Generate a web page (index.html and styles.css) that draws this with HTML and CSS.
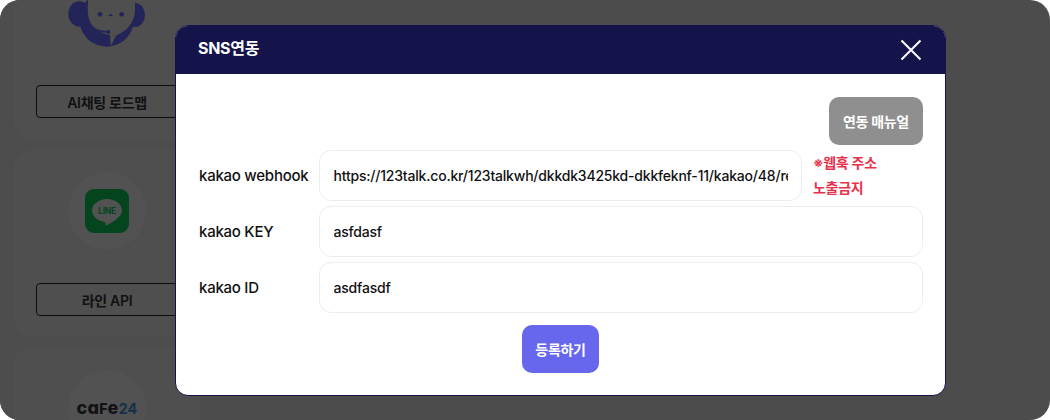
FILE: index.html
```html
<!DOCTYPE html>
<html lang="ko">
<head>
<meta charset="utf-8">
<title>SNS연동</title>
<link rel="stylesheet" href="styles.css">
</head>
<body>
<div class="screen">
  <div class="sidebar">
    <section class="card card-first">
      <svg class="bot" width="95" height="55" viewBox="0 0 285 165" aria-hidden="true">
        <ellipse class="bot-fill" cx="58" cy="42" rx="33" ry="38"/>
        <ellipse class="bot-fill" cx="225" cy="45" rx="30" ry="36"/>
        <circle class="bot-fill" cx="140" cy="58" r="82"/>
        <path class="bot-face" d="M85 -5C80 40 85 68 105 85C120 97 135 103 150 106L152 138C160 125 163 115 170 105C200 95 225 65 225 30L225 -5Z"/>
        <path class="bot-line" d="M82 70C95 85 115 95 145 96"/>
        <circle class="bot-fill" cx="145" cy="96" r="6"/>
        <circle class="bot-fill" cx="120" cy="43" r="7"/>
        <circle class="bot-fill" cx="185" cy="43" r="7"/>
        <ellipse class="bot-fill" cx="152" cy="46" rx="6" ry="3"/>
      </svg>
      <div class="tag">AI채팅 로드맵</div>
    </section>
    <section class="card card-line">
      <div class="logo-circle">
        <div class="line-box">
          <svg width="44" height="44" viewBox="0 0 44 44" aria-hidden="true">
            <path class="line-bubble" d="M22 10C13.7 10 7 15.2 7 21.6C7 27.3 12.2 32 19.3 33C20.4 33.2 20.7 34 20.5 35C20.3 36.3 20.9 36.8 22.5 36C26 34.2 37 28.5 37 21.6C37 15.2 30.3 10 22 10Z"/>
            <text class="line-text" x="22" y="25" text-anchor="middle">LINE</text>
          </svg>
        </div>
      </div>
      <div class="tag">라인 API</div>
    </section>
    <section class="card card-cafe">
      <div class="logo-circle logo-cafe"><span class="cafe">ca<span class="cafe-f">f</span>e<span class="cafe-num">24</span></span></div>
    </section>
  </div>

  <div class="modal" role="dialog">
    <header class="modal-head">
      <h2 class="modal-title">SNS연동</h2>
      <svg class="close" width="22" height="22" viewBox="0 0 22 22" aria-hidden="true"><path d="M1.5 1.5L20.5 20.5M20.5 1.5L1.5 20.5"/></svg>
    </header>
    <div class="modal-body">
      <div class="manual-row"><button class="btn btn-manual" type="button">연동 매뉴얼</button></div>
      <div class="field">
        <label class="field-label">kakao webhook</label>
        <input class="field-input field-input-short" type="text" value="https://123talk.co.kr/123talkwh/dkkdk3425kd-dkkfeknf-11/kakao/48/receive">
        <p class="warn">※웹훅 주소<br>노출금지</p>
      </div>
      <div class="field">
        <label class="field-label">kakao KEY</label>
        <input class="field-input" type="text" value="asfdasf">
      </div>
      <div class="field">
        <label class="field-label">kakao ID</label>
        <input class="field-input" type="text" value="asdfasdf">
      </div>
      <div class="submit-row"><button class="btn btn-submit" type="button">등록하기</button></div>
    </div>
  </div>
</div>
</body>
</html>
```

FILE: styles.css
```css
* { box-sizing: border-box; }
html, body { margin: 0; padding: 0; }
body {
  width: 1050px;
  height: 420px;
  overflow: hidden;
  background: #fff;
  font-family: Inter, "Noto Sans CJK KR", "Noto Sans", sans-serif;
  letter-spacing: -0.3px;
}
.screen {
  position: relative;
  width: 1050px;
  height: 420px;
  background: #4c4c4c;
  border-radius: 20px;
  overflow: hidden;
}
.sidebar {
  width: 200px;
  height: 420px;
  background: #4d4d4d;
  padding-left: 14px;
  display: flex;
  flex-direction: column;
  gap: 11px;
  overflow: hidden;
}
.card {
  flex: none;
  width: 186px;
  background: #4f4f4f;
  border-radius: 16px;
  display: flex;
  flex-direction: column;
  position: relative;
}
.card-first { height: 139px; justify-content: flex-end; padding-bottom: 21px; border-radius: 0 0 16px 16px; }
.bot { position: absolute; top: 0; left: 46px; }
.card-line { height: 187px; padding-top: 22px; }
.card-cafe { height: 90px; padding-top: 22px; }
.logo-circle {
  width: 78px;
  height: 78px;
  margin-left: 54px;
  border-radius: 50%;
  background: #525252;
  display: flex;
  align-items: center;
  justify-content: center;
  flex: none;
}
.logo-cafe { align-items: flex-start; padding-top: 28px; }
.bot-fill { fill: #232558; }
.bot-face { fill: #4f4f4f; }
.bot-line { fill: none; stroke: #232558; stroke-width: 5; }
.line-box {
  width: 44px;
  height: 44px;
  border-radius: 9px;
  background: #04451e;
  display: flex;
}
.line-bubble { fill: #525252; }
.line-text { font: 700 8.5px Inter, sans-serif; fill: #04451e; }
.cafe {
  font: 800 18px/20px Inter, sans-serif;
  font-feature-settings: "cv11";
  color: #121216;
  letter-spacing: 0.2px;
  white-space: nowrap;
}
.cafe-f { text-transform: uppercase; font-size: 14px; }
.cafe-num { color: #1a3248; font-size: 14px; }
.tag {
  flex: none;
  width: 142px;
  height: 33px;
  margin-left: 22px;
  border: 1px solid #0c0c0c;
  border-radius: 4px;
  display: flex;
  align-items: center;
  justify-content: center;
  font-size: 14px;
  font-weight: 600;
  color: #111;
}
.card-line .tag { margin-top: 33px; }

.modal {
  position: absolute;
  left: 175px;
  top: 25px;
  width: 771px;
  height: 371px;
  background: #fff;
  border: 1px solid #14144a;
  border-radius: 13px;
  overflow: hidden;
  display: flex;
  flex-direction: column;
}
.modal-head {
  flex: none;
  height: 48px;
  background: #14144a;
  display: flex;
  align-items: center;
  justify-content: space-between;
  padding: 0 23px 0 21px;
}
.modal-title {
  margin: 0 0 6px 1px;
  font-size: 16px;
  font-weight: 700;
  color: #fff;
  letter-spacing: -0.3px;
}
.close { flex: none; }
.close path { fill: none; stroke: #fff; stroke-width: 2; }
.modal-body {
  flex: 1;
  padding: 23px 22px 0 23px;
  display: flex;
  flex-direction: column;
  gap: 5px;
}
.manual-row { display: flex; justify-content: flex-end; }
.btn {
  border: 0;
  border-radius: 10px;
  color: #fff;
  font-family: inherit;
  font-size: 14px;
  font-weight: 700;
  letter-spacing: -0.3px;
  height: 48px;
  padding: 0;
}
.btn-manual { width: 94px; background: #8f8f8f; }
.btn-submit { width: 77px; background: #6767ee; }
.field { display: flex; align-items: center; height: 51px; }
.field-label {
  flex: none;
  width: 120px;
  font-size: 15px;
  font-weight: 500;
  color: #111;
  padding-bottom: 1px;
  letter-spacing: -0.25px;
}
.field-input {
  flex: 1;
  min-width: 0;
  height: 51px;
  border: 1.5px solid #ececec;
  border-radius: 12px;
  padding: 0 13.5px;
  font-family: inherit;
  font-size: 14px;
  font-weight: 500;
  color: #111;
  background: #fff;
  letter-spacing: -0.2px;
  outline: none;
}
.field-input-short { flex: none; width: 483px; }
.warn {
  margin: 0 0 2px 11px;
  font-size: 14px;
  line-height: 25px;
  font-weight: 600;
  color: #e8314d;
  white-space: nowrap;
}
.submit-row { display: flex; justify-content: center; margin-top: 7px; padding-right: 1px; }
```
